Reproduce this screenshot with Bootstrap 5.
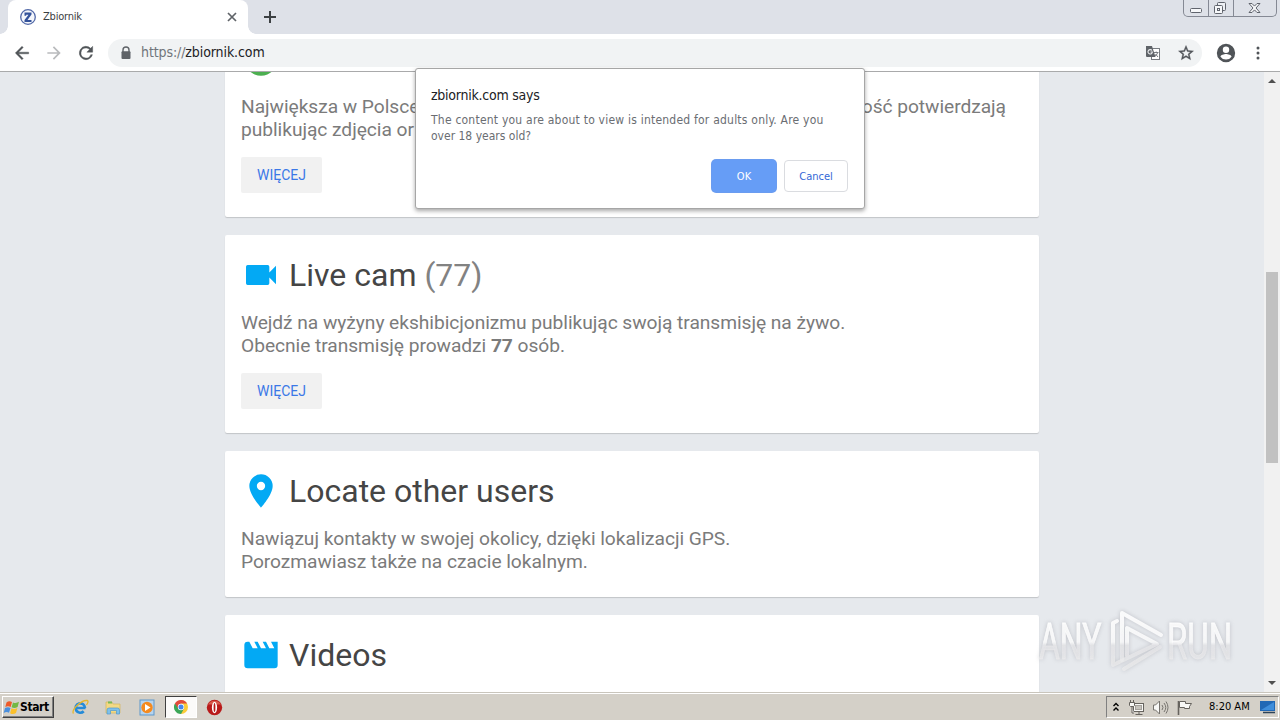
<!DOCTYPE html>
<html lang="pl">
<head>
<meta charset="utf-8">
<title>Zbiornik</title>
<meta name="viewport" content="width=device-width, initial-scale=1">
<link href="https://cdn.jsdelivr.net/npm/bootstrap@5.3.0/dist/css/bootstrap.min.css" rel="stylesheet">
<style>
body{width:1280px;height:720px;overflow:hidden;background:#e6e9ed;font-family:"DejaVu Sans Condensed","DejaVu Sans",sans-serif;font-size:11px;color:#333}
svg{display:block;flex:none}
.ui{font-family:"DejaVu Sans Condensed","DejaVu Sans",sans-serif;font-stretch:condensed;white-space:nowrap}
.tabstrip{height:34px;background:#dee1e8;padding-left:8px}
.tab{width:240px;height:34px;background:#fff;border-radius:8px 8px 0 0;padding:0 10px 0 12px}
.tab:before,.tab:after{content:"";position:absolute;bottom:0;width:8px;height:8px}
.tab:before{left:-8px;background:radial-gradient(circle at 0 0,transparent 7.5px,#fff 8px)}
.tab:after{right:-8px;background:radial-gradient(circle at 100% 0,transparent 7.5px,#fff 8px)}
.tab-title{font-size:11px;letter-spacing:-.2px;color:#3c4043;margin-left:7px;padding-top:1px}
.winbtns{width:94px;height:17px;margin-right:3px;border:1px solid #858994;border-top:0;border-radius:0 0 5px 5px}
.toolbar{height:38px;background:#fff;border-bottom:1px solid #a9aaab;padding:0 0 0 12px}
.omni{width:1094px;height:28px;border-radius:14px;background:#f1f3f4;padding:0 7px 0 12px}
.url{font-size:14px;letter-spacing:-.1px;color:#202124;padding-left:9px}
.url span{color:#70757a}
.nav-gap{margin-left:12px}
.page-view{height:620px;background:#e6e9ed}
.feed{width:814px;margin-left:225px;margin-top:-53px;gap:18px}
.tile{border-radius:2px;background:#fff;padding:20px 16px 24px;box-shadow:0 1px 1px rgba(0,0,0,.16);font-family:Roboto,sans-serif;flex:none}
.tile h2{height:40px;font-size:32px;line-height:40px;font-weight:400;color:#454545;margin:0 0 16px;gap:8px}
.tile h2 em{font-style:normal;color:#828282}
.tile p{font-size:19.2px;letter-spacing:-.05px;line-height:23px;color:#7b7b7b;margin:0;white-space:nowrap}
.more{width:81px;height:36px;margin-top:16px;padding:0;border:0;border-radius:2px;background:#f1f1f1;color:#3b78e7;font:400 14px/36px Roboto,sans-serif}
.split-line{width:765px}
.sbar{width:16px;background:#f1f1f1;right:0;top:0;bottom:0}
.thumb{width:12px;height:191px;background:#c1c1c1;margin:183px 0 0 2px}
.dialog-box{left:415px;top:68px;width:450px;height:141px;background:#fff;border:1px solid #a6a6a6;border-radius:3px;box-shadow:0 2px 4px rgba(0,0,0,.35);padding:17px 16px 16px 15px}
.dialog-box h1{font-size:14px;line-height:18px;letter-spacing:-.25px;margin:0 0 8px;color:#202124;font-weight:400}
.dialog-box p{font-size:12px;line-height:16px;color:#6a6d72;margin:0}
.dialog-box p .wide{letter-spacing:.22px}
.dlg-btn{height:32px;width:64px;border-radius:4px;font-size:11px;line-height:31px;padding:0;border:1px solid #dadce0;background:#fff;color:#3367d6}
.dlg-ok{background:#669df6;color:#fff;border-color:#669df6;box-shadow:0 0 0 1px #6a9cf0}
.wm{left:1034px;top:604px;filter:drop-shadow(0 0 2px rgba(120,120,130,.4))}
.taskbar{height:28px;background:#d4d0c8;border-top:1px solid #c9c5bc;box-shadow:inset 0 1px #fff;padding-top:1px}
.start{width:52px;height:22px;margin-left:2px;border:1px solid;border-color:#fff #404040 #404040 #fff;box-shadow:inset -1px -1px #808080;font:bold 12px "DejaVu Sans Condensed",sans-serif;letter-spacing:-.4px;color:#000}
.running{width:32px;height:22px;background:#fbfaf9;border:1px solid;border-color:#404040 #fff #fff #404040}
.tray{width:173px;height:22px;border:1px solid;border-color:#808080 #fff #fff #808080;margin-right:1px;color:#000}
</style>
</head>
<body class="d-flex flex-column position-relative m-0">
<header class="tabstrip d-flex flex-none">
  <div class="tab position-relative d-flex align-items-center">
    <svg width="16" height="16" viewBox="0 0 16 16"><circle cx="8" cy="8" r="7.3" fill="#f4f6fb" stroke="#5269a8" stroke-width="1.3"/><path d="M4.5 3.600h7v2L7.500 11h4v2h-7v-2l4-5.200H6.200v1H4.500z" fill="#33529b"/></svg>
    <span class="ui tab-title flex-grow-1">Zbiornik</span>
    <svg width="12" height="12" viewBox="0 0 12 12"><path d="M2 2l8 8M10 2l-8 8" stroke="#5f6368" stroke-width="1.700"/></svg>
  </div>
  <svg class="ms-3 align-self-center" width="12" height="12" viewBox="0 0 12 12"><path d="M6 0v12M0 6h12" stroke="#3c4043" stroke-width="2"/></svg>
  <div class="winbtns d-flex ms-auto">
    <svg width="92" height="16" viewBox="0 0 92 16" fill="none" stroke="#60646d"><path d="M24.500 0v16M49.500 0v16" stroke="#858994"/><rect x="6.500" y="8.500" width="11" height="4" rx="1" fill="#f6f7f9"/><rect x="33.500" y="2.500" width="8" height="8" rx="1" fill="#eef0f4"/><rect x="30.500" y="5.500" width="8" height="8" rx="1" fill="#f6f7f9"/><rect x="33.500" y="8.500" width="2" height="2"/><path d="M65 3.500h3l2.500 2.600L73 3.500h3l-4 4.500 4 4.500h-3l-2.500-2.600L68 12.500h-3L69 8z" fill="#f6f7f9"/></svg>
  </div>
</header>
<nav class="toolbar d-flex align-items-center flex-none">
  <svg width="20" height="20" viewBox="0 0 24 24" fill="#505458"><path d="M20 11H7.830l5.590-5.590L12 4l-8 8 8 8 1.410-1.410L7.830 13H20z" stroke="#505458" stroke-width=".5"/></svg>
  <svg class="nav-gap" width="20" height="20" viewBox="0 0 24 24" fill="#b9bbbd"><path d="M4 11h12.170l-5.590-5.590L12 4l8 8-8 8-1.410-1.410L16.170 13H4z"/></svg>
  <svg class="nav-gap" width="20" height="20" viewBox="0 0 24 24" fill="#505458"><path d="M17.650 6.350A8 8 0 1 0 19.730 14h-2.080A6 6 0 1 1 12 6c1.660 0 3.140.69 4.220 1.780L13 11h7V4z" stroke="#505458" stroke-width=".5"/></svg>
  <div class="omni nav-gap d-flex align-items-center">
    <svg width="12" height="14" viewBox="0 0 12 14"><path d="M3 6V4a3 3 0 0 1 6 0v2" fill="none" stroke="#5f6368" stroke-width="1.400"/><rect x="1.500" y="5.300" width="9" height="7.700" rx="1" fill="#5f6368"/></svg>
    <span class="ui url flex-grow-1"><span>https://</span>zbiornik.com</span>
    <svg width="16" height="16" viewBox="0 0 16 16"><rect x="6.500" y="3.500" width="8" height="11" fill="#fff" stroke="#777b80"/><path d="M1 1h6l3.500 11H2a1 1 0 0 1-1-1z" fill="#5f6368"/><path d="M7 5.500a2.200 2.200 0 1 0 .4 1.500H5.500" fill="none" stroke="#eceef0" stroke-width="1.100"/><path d="M9 7.500h4.500M11.200 6.500v1M12.500 8c-.4 1.500-1.400 2.500-2.500 3M10.500 9l2.500 3" fill="none" stroke="#777b80"/></svg>
    <svg class="ms-3" width="18" height="18" viewBox="0 0 24 24" fill="#505458"><path stroke="#505458" stroke-width=".5" d="M22 9.240l-7.190-.62L12 2 9.190 8.630 2 9.240l5.460 4.730L5.820 21 12 17.270 18.180 21l-1.630-7.030zM12 15.400l-3.760 2.270 1-4.280-3.320-2.880 4.380-.38L12 6.100l1.710 4.040 4.380.38-3.320 2.880 1 4.280z"/></svg>
  </div>
  <svg style="margin-left:13px" width="22" height="22" viewBox="0 0 24 24" fill="#505458"><path d="M12 2a10 10 0 1 0 0 20 10 10 0 0 0 0-20zm0 3a3.500 3.500 0 1 1 0 7 3.500 3.500 0 0 1 0-7zm0 14.200a7 7 0 0 1-6-3.200c.03-2 4-3 6-3s5.970 1 6 3a7 7 0 0 1-6 3.200z"/></svg>
  <svg style="margin-left:19px" width="4" height="16" viewBox="0 0 4 16" fill="#505458"><circle cx="2" cy="3" r="1.500"/><circle cx="2" cy="8" r="1.500"/><circle cx="2" cy="13" r="1.500"/></svg>
</nav>
<main class="page-view position-relative overflow-hidden flex-none">
  <div class="feed d-flex flex-column">
    <section class="tile">
      <h2 class="d-flex"><svg width="40" height="40" viewBox="0 0 24 24"><circle cx="12" cy="12" r="10" fill="#4caf50"/></svg></h2>
      <p class="d-flex justify-content-between split-line"><span>Największa w Polsce</span><span>ość potwierdzają</span></p>
      <p>publikując zdjęcia or</p>
      <button class="more btn d-block">WIĘCEJ</button>
    </section>
    <section class="tile">
      <h2 class="d-flex"><svg width="40" height="40" viewBox="0 0 24 24" fill="#03a9f4"><path d="M17 10.500V7a1 1 0 0 0-1-1H4a1 1 0 0 0-1 1v10a1 1 0 0 0 1 1h12a1 1 0 0 0 1-1v-3.500l4 4v-11z"/></svg><span>Live cam <em>(77)</em></span></h2>
      <p>Wejdź na wyżyny ekshibicjonizmu publikując swoją transmisję na żywo.<br>Obecnie transmisję prowadzi <b>77</b> osób.</p>
      <button class="more btn d-block">WIĘCEJ</button>
    </section>
    <section class="tile">
      <h2 class="d-flex"><svg width="40" height="40" viewBox="0 0 24 24" fill="#03a9f4"><path d="M12 2a7 7 0 0 0-7 7c0 5.250 7 13 7 13s7-7.750 7-13a7 7 0 0 0-7-7zm0 9.500a2.500 2.500 0 1 1 0-5 2.500 2.500 0 0 1 0 5z"/></svg><span>Locate other users</span></h2>
      <p>Nawiązuj kontakty w swojej okolicy, dzięki lokalizacji GPS.<br>Porozmawiasz także na czacie lokalnym.</p>
    </section>
    <section class="tile">
      <h2 class="d-flex"><svg width="40" height="40" viewBox="0 0 24 24" fill="#03a9f4"><path d="M18 4l2 4h-3l-2-4h-2l2 4h-3l-2-4H8l2 4H7L5 4H4a2 2 0 0 0-2 2v12a2 2 0 0 0 2 2h16a2 2 0 0 0 2-2V4z"/></svg><span>Videos</span></h2>
    </section>
  </div>
  <div class="sbar position-absolute d-flex flex-column">
    <svg width="16" height="17" viewBox="0 0 16 17"><path d="M4 11l4-4 4 4z" fill="#505050"/></svg>
    <div class="thumb"></div>
    <svg class="mt-auto" width="16" height="17" viewBox="0 0 16 17"><path d="M4 6l4 4 4-4z" fill="#505050"/></svg>
  </div>
</main>
<footer class="taskbar d-flex align-items-center">
  <div class="start d-flex align-items-center">
    <svg width="17" height="17" viewBox="0 0 17 17"><path d="M3.500 3.500Q6 1.500 9 3L7.700 8Q5 6.500 2.300 8z" fill="#ee5a28"/><path d="M10 3.400q3 1.300 6-.6L14.600 8q-3 1.700-6 .3z" fill="#73b843"/><path d="M2 9q3-1.700 5.500 0L6 13.800Q3.500 12.300.7 14z" fill="#4a8fdd"/><path d="M8.500 9.300q3 1.400 5.900-.3L13 14q-3 2-5.900.2z" fill="#fbc02a"/></svg><span class="ui">Start</span>
  </div>
  <svg style="margin-left:18px" width="17" height="17" viewBox="0 0 17 17" fill="none"><path d="M13.500 9H4.800M13 9a4.700 4.700 0 1 0-1.300 3.300" stroke="#258bd8" stroke-width="2.700"/><path d="M1.500 14.500C-1 11 9 1 15 1.500c2 .3.500 3-.5 4.500" stroke="#e4b62d" stroke-width="1.300"/></svg>
  <svg style="margin-left:16px" width="17" height="17" viewBox="0 0 17 17"><path d="M1 3h6l1 2h7v9H1z" fill="#f3d984" stroke="#d2b45c" stroke-width=".7"/><path d="M3 2.500h4v2H3z" fill="#79b956"/><path d="M2 15v-4q0-2 2-2h8.500q2 0 2 2v4h-3v-3.500h-6V15z" fill="#7fc0ea" stroke="#4d9ad0" stroke-width=".7"/></svg>
  <svg style="margin-left:17px" width="17" height="17" viewBox="0 0 17 17"><rect x="1" y="1" width="14" height="15" fill="#b7d4ee" stroke="#5c97cb"/><circle cx="8" cy="8.500" r="5.700" fill="#f58a1f"/><path d="M6 5l5.500 3.500L6 12z" fill="#fff"/></svg>
  <div class="running d-flex align-items-center justify-content-center" style="margin-left:9px"><svg width="14" height="14" viewBox="0 0 24 24"><path d="M12 12V0a12 12 0 0 1 0 24z" fill="#fbcb38"/><path d="M12 12L1.600 6A12 12 0 0 0 12 24l5-9z" fill="#3ba657"/><path d="M1.600 6a12 12 0 0 1 20.800 0H12l-5 8z" fill="#e24a3b"/><circle cx="12" cy="12" r="5.500" fill="#fff"/><circle cx="12" cy="12" r="4.300" fill="#4586ee"/></svg></div>
  <svg style="margin-left:9px" width="17" height="17" viewBox="0 0 17 17"><circle cx="8.500" cy="8.500" r="7.700" fill="#b81a1a"/><path d="M2 5.500a7.500 7.500 0 0 1 13 0z" fill="#d8594c"/><ellipse cx="8.500" cy="8.500" rx="2.600" ry="5.700" fill="#fff"/><ellipse cx="8.500" cy="8.500" rx=".9" ry="4.600" fill="#b81a1a"/></svg>
  <div class="tray d-flex align-items-center ms-auto">
    <svg style="margin-left:5px" width="8" height="11" viewBox="0 0 8 11" fill="none" stroke="#000" stroke-width="1.400"><path d="M1.500 4L4 1.500 6.500 4M1.500 8.500L4 6l2.500 2.500"/></svg>
    <svg style="margin-left:8px" width="17" height="17" viewBox="0 0 17 17" fill="#f8f8f6" stroke="#66635e"><rect x="5.500" y="4.500" width="10" height="8"/><path d="M7.500 15.500h7M11 13v2"/><rect x="7.500" y="6.500" width="6" height="4" fill="#c6c3bd" stroke="#a5a29c"/><path d="M1.500 3.500h5v3l-1 1h-3l-1-1zM2.500 1v2M5.500 1v2M4 8v6h2"/></svg>
    <svg style="margin-left:7px" width="17" height="17" viewBox="0 0 17 17" fill="#f8f8f6" stroke="#77746f"><path d="M1.500 6v5h2l4 4V2l-4 4z"/><path d="M10 6q2 2.500 0 5M12 4q3.500 4.500 0 9M14 2.500q4 6 0 12" fill="none"/></svg>
    <svg style="margin-left:7px" width="17" height="17" viewBox="0 0 17 17" fill="#f8f8f6" stroke="#66635e"><path d="M2.500 2v14" stroke-width="1.600"/><path d="M3.500 2.500h6v2h6l-2 3v2h-5v-1h-5z"/></svg>
    <span class="ui ms-3">8:20 AM</span>
    <svg class="ms-auto" style="margin-right:2px" width="16" height="13" viewBox="0 0 16 13"><path d="M0 0h15v10H0z" fill="#2168b5"/><path d="M1 9L14 1v8z" fill="#3f8edb"/><path d="M3 11.500h12" stroke="#2d4358" stroke-width="1.500"/></svg>
  </div>
</footer>
<div class="dialog-box position-absolute ui d-flex flex-column" role="dialog">
  <h1>zbiornik.com says</h1>
  <p><span class="wide">The content you are about to view is intended for adults only. Are you</span><br>over 18 years old?</p>
  <div class="mt-auto d-flex justify-content-end gap-2"><button class="dlg-btn dlg-ok btn">OK</button><button class="dlg-btn btn">Cancel</button></div>
</div>
<svg class="wm position-absolute" width="230" height="84" viewBox="0 0 230 84">
  <defs><linearGradient id="fade" gradientUnits="userSpaceOnUse" x1="0" y1="10" x2="0" y2="66"><stop offset="0" stop-color="#fff" stop-opacity=".9"/><stop offset=".5" stop-color="#fff" stop-opacity=".8"/><stop offset=".56" stop-color="#e6e6e9" stop-opacity=".8"/><stop offset="1" stop-color="#eee" stop-opacity=".7"/></linearGradient></defs>
  <g fill="url(#fade)" stroke="url(#fade)" stroke-width=".8" font-family="Roboto" font-weight="400" font-size="50"><text transform="translate(5) scale(.64 1)" y="55">ANY</text><text transform="translate(133) scale(.66 1)" y="55">RUN</text></g>
  <g fill="none" stroke="url(#fade)" stroke-width="4" stroke-linejoin="round" stroke-linecap="round"><path d="M83 17l-4 2v42l44-21L93 24v28"/><path d="M88 56V9l39 22M126 43L90 65"/></g>
</svg>
<script src="https://cdn.jsdelivr.net/npm/bootstrap@5.3.0/dist/js/bootstrap.bundle.min.js"></script>
</body>
</html>
